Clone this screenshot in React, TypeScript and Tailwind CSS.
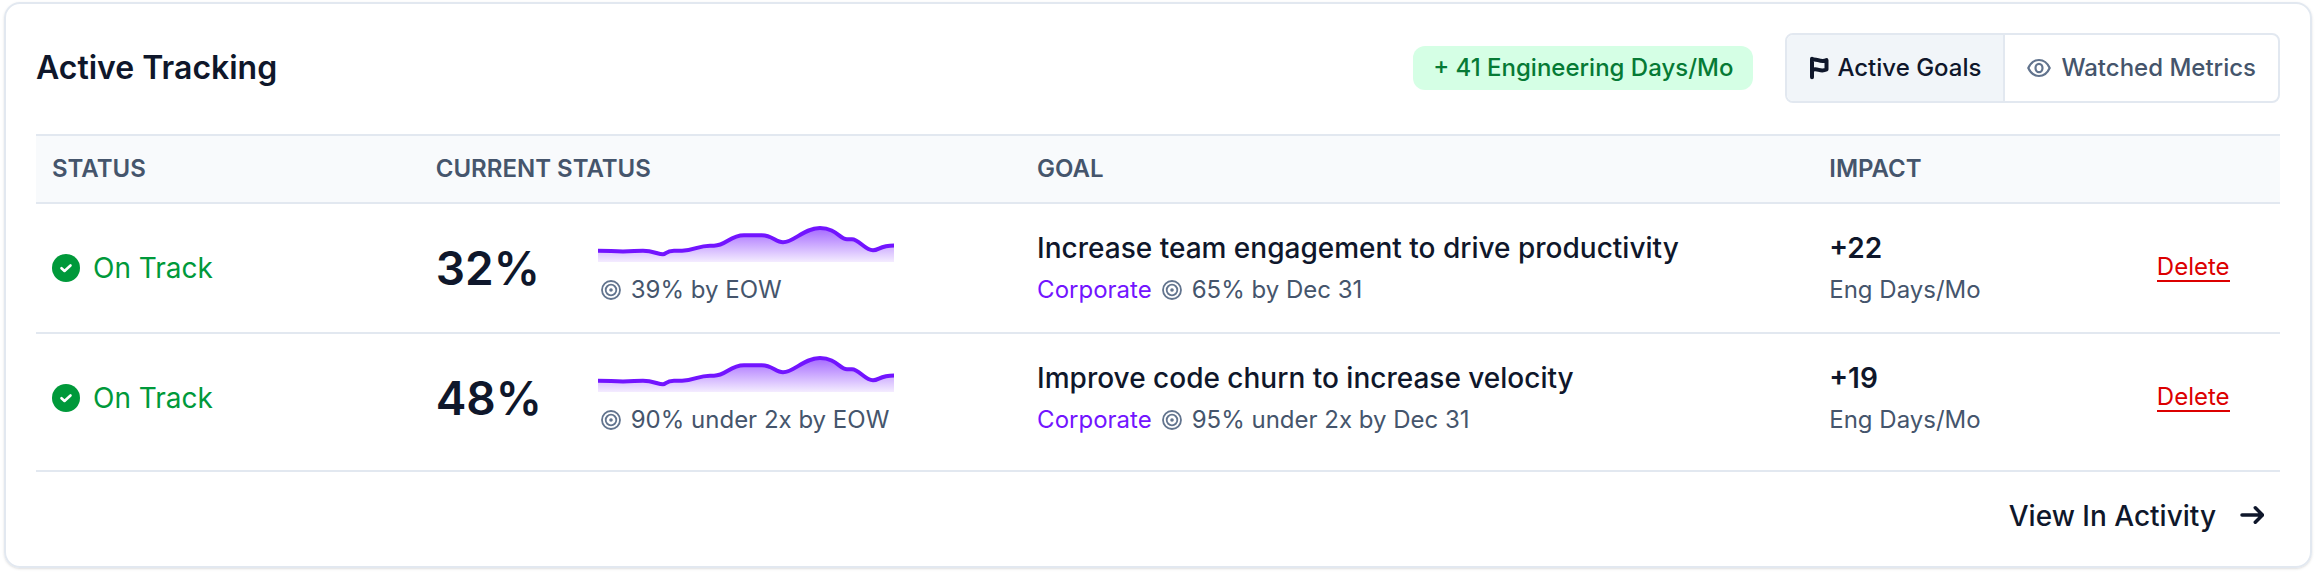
import { useState } from "react";

interface Goal {
  id: number;
  current: string;
  weekly: string;
  title: string;
  scope: string;
  target: string;
  impact: string;
}

const goals: Goal[] = [
  {
    id: 1,
    current: "32%",
    weekly: "39% by EOW",
    title: "Increase team engagement to drive productivity",
    scope: "Corporate",
    target: "65% by Dec 31",
    impact: "+22",
  },
  {
    id: 2,
    current: "48%",
    weekly: "90% under 2x by EOW",
    title: "Improve code churn to increase velocity",
    scope: "Corporate",
    target: "95% under 2x by Dec 31",
    impact: "+19",
  },
];

// icons
const FlagIcon = () => (
  <svg viewBox="0 0 20 24" className="w-5 h-6" fill="none" aria-hidden="true">
    <path
      d="M3 2.800V21.200M3 3.800C8 2 11 7 17.500 4.200V13.500C11 16.500 8.500 11.500 3 14"
      stroke="currentColor"
      strokeWidth="4"
      strokeLinecap="round"
      strokeLinejoin="round"
    />
  </svg>
);

const EyeIcon = () => (
  <svg
    viewBox="0 0 24 24"
    className="w-6 h-6 text-slate-500"
    fill="none"
    stroke="currentColor"
    strokeWidth="2.200"
    strokeLinejoin="round"
    aria-hidden="true"
  >
    <path d="M1.300 12C3.500 7.200 7.200 4 12 4s8.500 3.200 10.700 8c-2.200 4.800-5.900 8-10.700 8S3.500 16.800 1.300 12Z" />
    <ellipse cx="12" cy="12" rx="3.500" ry="4.200" />
  </svg>
);

const TargetIcon = () => (
  <svg
    viewBox="0 0 20 20"
    className="w-5 h-5 shrink-0 text-slate-500"
    fill="none"
    stroke="currentColor"
    strokeWidth="1.800"
    aria-hidden="true"
  >
    <circle cx="10" cy="10" r="9" />
    <circle cx="10" cy="10" r="5.300" />
    <circle cx="10" cy="10" r="1.800" fill="currentColor" stroke="none" />
  </svg>
);

const CheckIcon = () => (
  <svg viewBox="0 0 28 28" className="w-7 h-7" aria-hidden="true">
    <circle cx="14" cy="14" r="14" fill="currentColor" />
    <path
      d="M9.500 14.200l3 2.800 6-5.500"
      fill="none"
      stroke="#fff"
      strokeWidth="2.600"
      strokeLinecap="round"
      strokeLinejoin="round"
    />
  </svg>
);

const ArrowIcon = () => (
  <svg
    viewBox="0 0 24 24"
    className="w-6 h-6"
    fill="none"
    stroke="currentColor"
    strokeWidth="3.500"
    strokeLinecap="round"
    strokeLinejoin="round"
    aria-hidden="true"
  >
    <path d="M2 11h20.500M15.300 3.800l7.200 7.200-7.200 7.200" />
  </svg>
);

const line =
  "M0 28.700C12 28.700 14 29.500 25 29.500S36 28.700 45 28.700C55 28.700 60 32.300 65 32.300C68 32.300 68 28.700 76 28.700H84C96 28.700 100 23.700 112 23.700H116C128 23.700 132 13.300 146 13.300H164C174 13.300 178 20.300 185 20.300C196 20.300 206 6 222 6C238 6 242 17.300 249 17.300H254C261 17.300 267 28.300 275 28.300C281 28.300 282 23.500 296 23.500";

const Sparkline = ({ id }: { id: string }) => (
  <svg viewBox="0 0 296 40" className="w-[296px] h-10 block" aria-hidden="true">
    <defs>
      <linearGradient id={id} x1="0" y1="0" x2="0" y2="1">
        <stop offset="0" stopColor="#7214ff" stopOpacity="0.640" />
        <stop offset="1" stopColor="#7214ff" stopOpacity="0.080" />
      </linearGradient>
    </defs>
    <path d={`${line}V40H0Z`} fill={`url(#${id})`} />
    <path d={line} fill="none" stroke="#7214ff" strokeWidth="4" />
  </svg>
);

const GoalRow = ({ goal, last }: { goal: Goal; last: boolean }) => {
  const cell = last ? "px-4 py-[18px]" : "px-4 py-[18px] border-b-2 border-slate-200";

  return (
    <tr>
      <td className={cell}>
        <div className="flex items-center gap-[13px] text-[28px] leading-10 text-[#00993a]">
          <CheckIcon />
          <span>On Track</span>
        </div>
      </td>
      <td className={cell}>
        <div className="flex items-center">
          <span className="w-[162px] text-[46px] leading-[48px] font-semibold">
            {goal.current}
          </span>
          <div className="flex flex-col gap-2 h-[92px]">
            <Sparkline id={`spark-${goal.id}`} />
            <div className="flex items-center gap-2.5 pl-[3px] text-2xl leading-10 text-slate-600">
              <TargetIcon />
              <span>{goal.weekly}</span>
            </div>
          </div>
        </div>
      </td>
      <td className={cell}>
        <div className="pt-0.5 text-[28px] leading-10 font-medium">{goal.title}</div>
        <div className="mt-0.5 flex items-center gap-2.5 text-2xl leading-10 text-slate-600">
          <span className="text-[#7214ff]">{goal.scope}</span>
          <TargetIcon />
          <span>{goal.target}</span>
        </div>
      </td>
      <td className={cell}>
        <div className="pt-0.5 text-[28px] leading-10 font-semibold">{goal.impact}</div>
        <div className="mt-0.5 text-2xl leading-10 text-slate-600">Eng Days/Mo</div>
      </td>
      <td className={cell}>
        <button
          type="button"
          className="text-2xl leading-[26px] text-[#dc0000] border-b-2 border-[#dc0000]"
        >
          Delete
        </button>
      </td>
    </tr>
  );
};

const App: React.FC = () => {
  const [tab, setTab] = useState("goals");

  return (
    <div className="bg-white pl-1 pr-1 pt-0.5 pb-1.5 font-['Inter',sans-serif] text-slate-900">
      <section className="border-2 border-slate-200 rounded-2xl shadow-sm px-[30px] pt-[29px] pb-[30px]">
        <header className="flex items-center justify-between">
          <h2 className="text-[32px] leading-10 font-semibold">Active Tracking</h2>
          <div className="flex items-center gap-8">
            <span className="px-5 py-1.5 rounded-xl bg-[#d5ffe5] text-2xl leading-8 font-medium text-[#067a35]">
              + 41 Engineering Days/Mo
            </span>
            <div className="flex border-2 border-slate-200 rounded-lg overflow-hidden text-2xl font-medium">
              <button
                type="button"
                aria-pressed={tab === "goals"}
                onClick={() => setTab("goals")}
                className="flex items-center gap-2 px-[22px] py-[17px] leading-8 bg-slate-100 border-r-2 border-slate-200"
              >
                <FlagIcon />
                Active Goals
              </button>
              <button
                type="button"
                aria-pressed={tab === "metrics"}
                onClick={() => setTab("metrics")}
                className="flex items-center gap-2.5 px-[22px] py-[17px] leading-8 text-slate-600"
              >
                <EyeIcon />
                Watched Metrics
              </button>
            </div>
          </div>
        </header>

        <table className="mt-[31px] w-full table-fixed border-separate border-spacing-0 text-left">
          <colgroup>
            <col className="w-[17.1%]" />
            <col className="w-[26.8%]" />
            <col className="w-[35.3%]" />
            <col className="w-[14.600%]" />
            <col />
          </colgroup>
          <thead>
            <tr className="bg-slate-50 text-2xl leading-[34px] text-slate-600">
              <th className="px-4 py-4 border-y-2 border-slate-200 font-semibold">STATUS</th>
              <th className="px-4 py-4 border-y-2 border-slate-200 font-semibold">
                CURRENT STATUS
              </th>
              <th className="px-4 py-4 border-y-2 border-slate-200 font-semibold">GOAL</th>
              <th className="px-4 py-4 border-y-2 border-slate-200 font-semibold">IMPACT</th>
              <th className="px-4 py-4 border-y-2 border-slate-200" aria-label="Actions" />
            </tr>
          </thead>
          <tbody>
            {goals.map((goal, i) => (
              <GoalRow key={goal.id} goal={goal} last={i === goals.length - 1} />
            ))}
          </tbody>
        </table>

        <footer className="mt-2 pt-6 px-4 flex justify-end border-t-2 border-slate-200">
          <a href="#activity" className="flex items-center gap-6 text-[28px] leading-10 font-medium">
            View In Activity
            <ArrowIcon />
          </a>
        </footer>
      </section>
    </div>
  );
};

export default App;
